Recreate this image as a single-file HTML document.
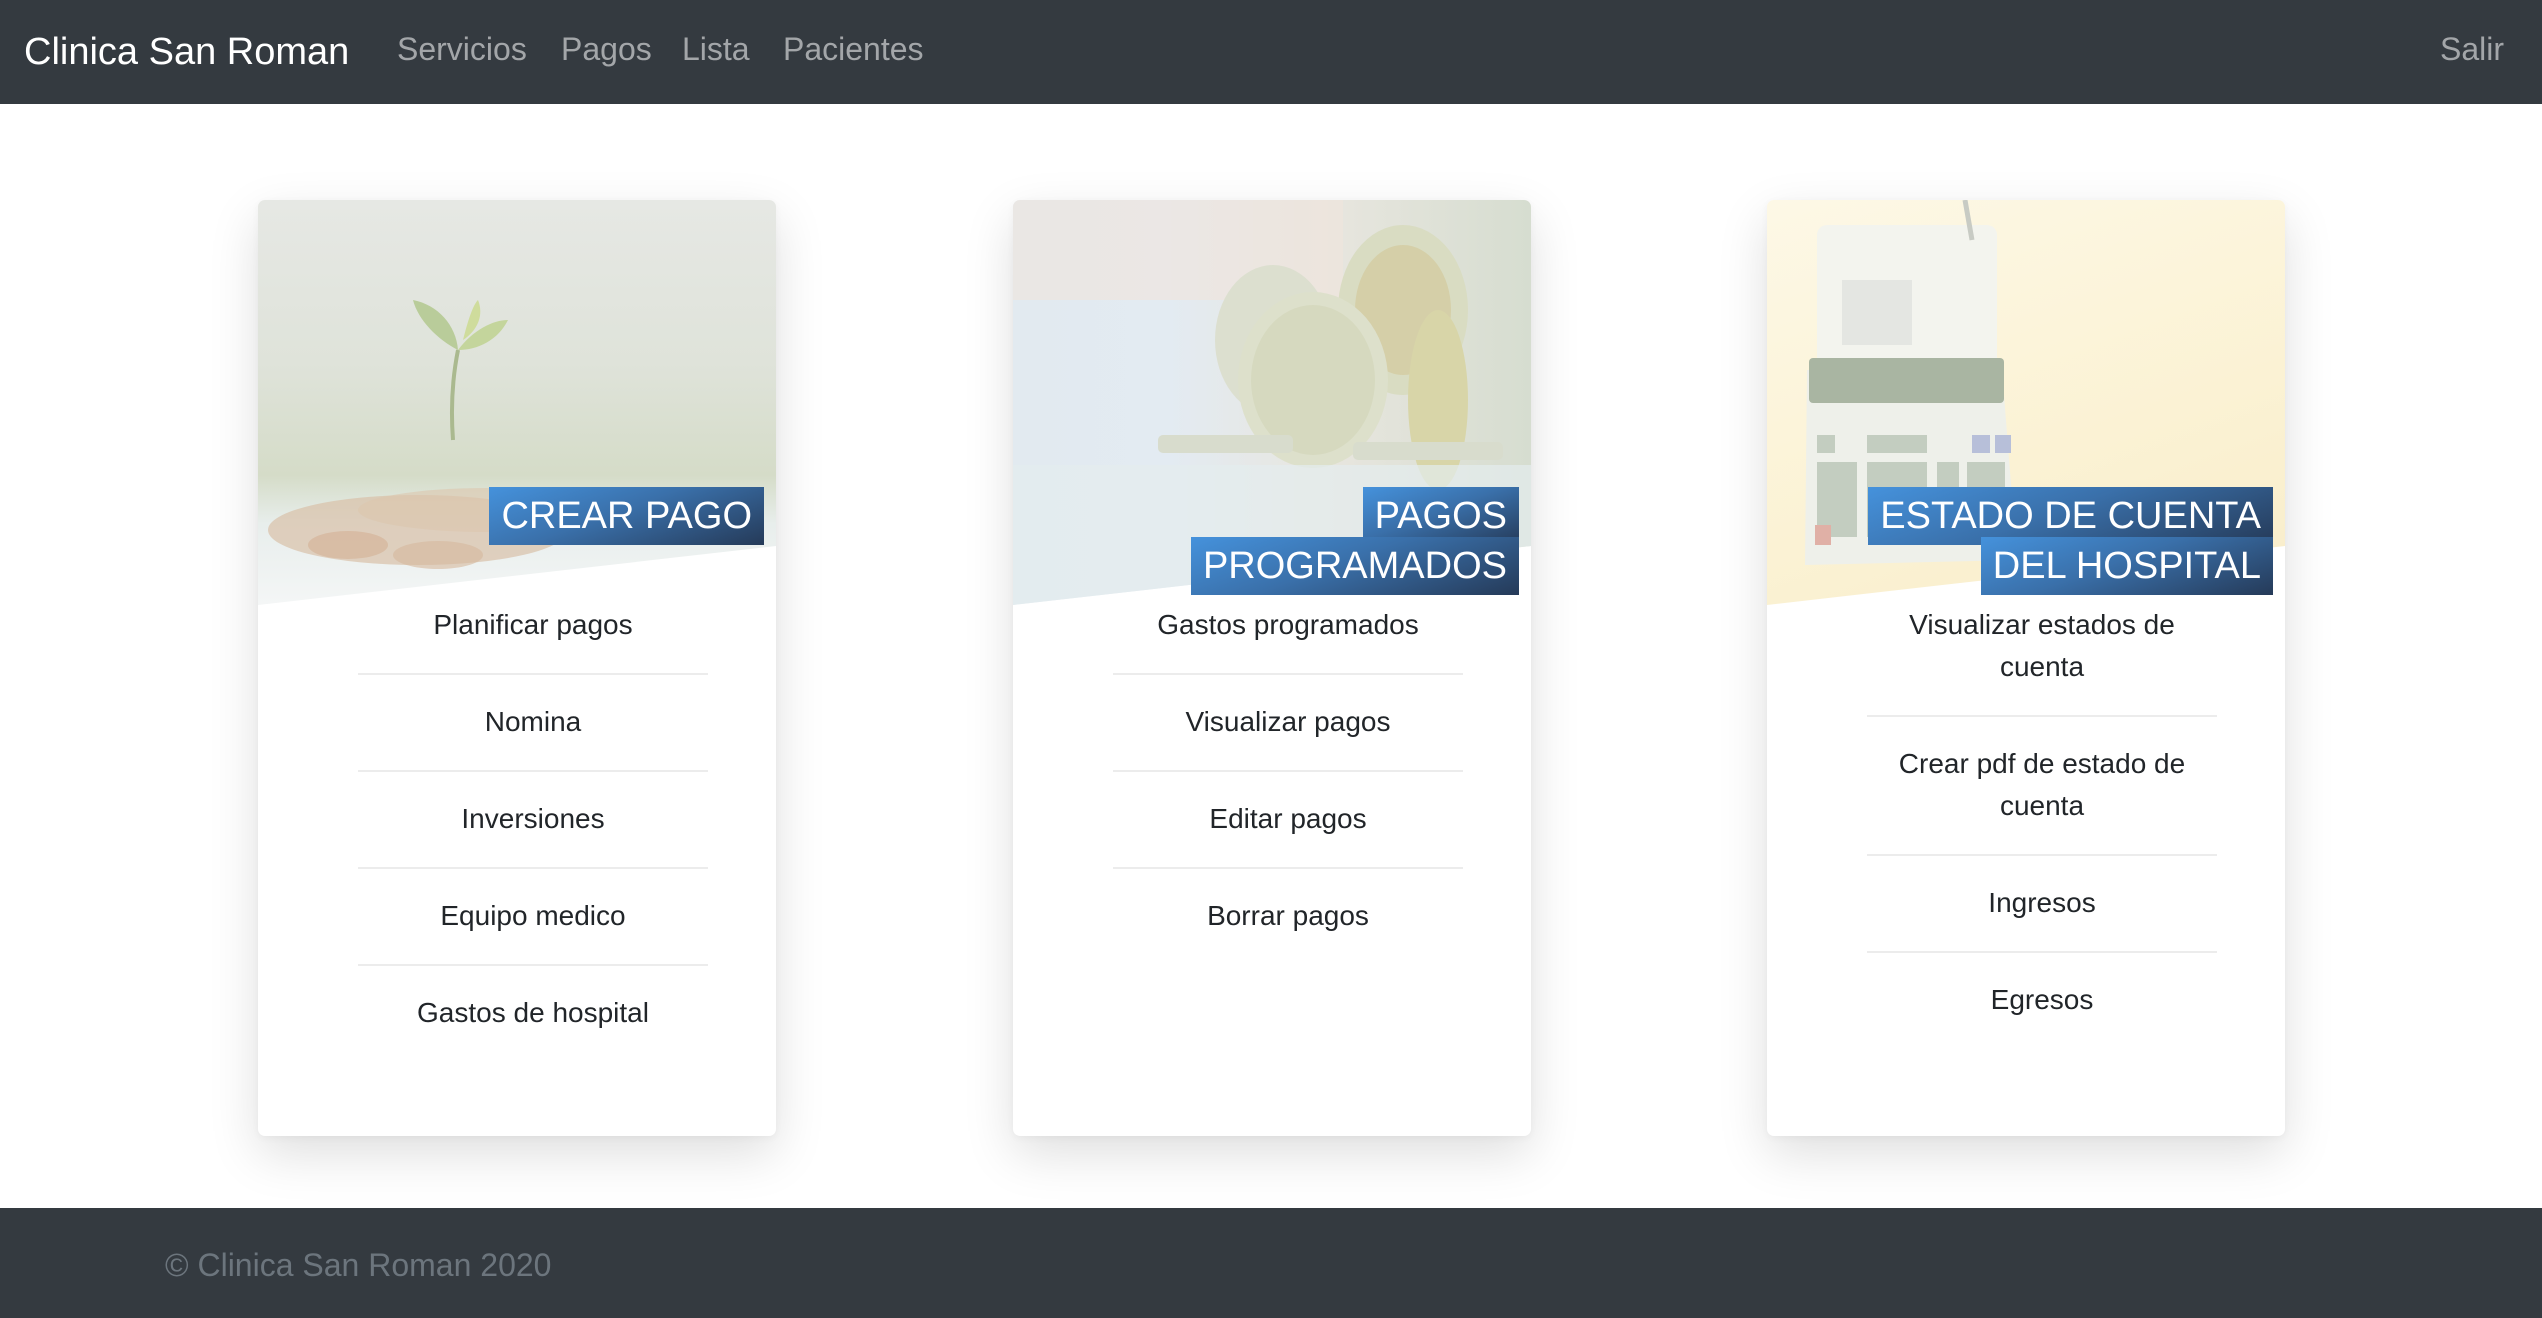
<!DOCTYPE html>
<html><head><meta charset="utf-8">
<style>
*{box-sizing:border-box;margin:0;padding:0}
html,body{width:2542px;height:1318px;overflow:hidden;background:#fff;font-family:"Liberation Sans",sans-serif}
.nav{position:absolute;left:0;top:0;width:2542px;height:104px;background:#343a40}
.brand{position:absolute;left:24px;top:29px;font-size:38px;color:#fff;line-height:46px}
.nl{position:absolute;top:30px;font-size:32px;color:#a3a6a9;line-height:38px}
.card{position:absolute;top:200px;width:518px;height:936px;background:#fff;border-radius:7px;box-shadow:0 18px 50px rgba(0,0,0,.13),0 2px 8px rgba(0,0,0,.04);overflow:hidden}
.img{position:absolute;left:0;top:0;width:518px;height:405px;clip-path:polygon(0 0,100% 0,100% 346px,0 405px)}
.lbl{position:absolute;right:12px;top:291px;text-align:right;font-size:38px;line-height:50px;width:490px}
.lbl span{color:#fff;padding:8px 12px;background:linear-gradient(160deg,#4592dc 0%,#3a70aa 45%,#253a58 100%);-webkit-box-decoration-break:clone;box-decoration-break:clone}
.list{position:absolute;left:100px;top:378px;width:350px;text-align:center}
.list div{font-size:28px;line-height:42px;color:#212529;padding:26px 0 27px;border-bottom:2px solid #ececec}
.list div:last-child{border-bottom:none}
.foot{position:absolute;left:0;top:1208px;width:2542px;height:110px;background:#343a40}
.foot span{position:absolute;left:165px;top:39px;font-size:32px;color:#6c757d}
</style></head><body>
<div class="nav">
<div class="brand">Clinica San Roman</div>
<div class="nl" style="left:397px">Servicios</div>
<div class="nl" style="left:561px">Pagos</div>
<div class="nl" style="left:682px">Lista</div>
<div class="nl" style="left:783px">Pacientes</div>
<div class="nl" style="left:2440px">Salir</div>
</div>

<div class="card" style="left:258px">
<div class="img" style="background:linear-gradient(180deg,#e6e8e4 0%,#dfe3da 40%,#d5dcc8 68%,#e8eeec 80%,#f4f6f6 100%)">
<svg width="518" height="405" viewBox="0 0 518 405">
<path d="M195 240 C192 200 196 170 200 150" stroke="#aab98f" stroke-width="4" fill="none"/>
<path d="M200 150 C180 140 160 120 155 100 C180 105 198 125 200 150Z" fill="#b9cc9a"/>
<path d="M200 150 C215 130 235 120 250 120 C240 140 220 150 200 150Z" fill="#c4d59c"/>
<path d="M205 140 C210 120 215 105 220 100 C226 115 220 130 205 140Z" fill="#cfdc9c"/>
<ellipse cx="160" cy="330" rx="150" ry="35" fill="#d9c0a8" opacity=".7"/>
<ellipse cx="230" cy="310" rx="130" ry="22" fill="#dcc6ad" opacity=".6"/>
<ellipse cx="90" cy="345" rx="40" ry="14" fill="#d3b195" opacity=".6"/>
<ellipse cx="180" cy="355" rx="45" ry="14" fill="#d6b79c" opacity=".6"/>
</svg>
</div>
<div class="list">
<div>Planificar pagos</div><div>Nomina</div><div>Inversiones</div><div>Equipo medico</div><div>Gastos de hospital</div>
</div>
<div class="lbl"><span>CREAR PAGO</span></div>
</div>

<div class="card" style="left:1013px">
<div class="img" style="background:linear-gradient(90deg,#e2eaf0 0%,#e3ebf2 30%,#e8e6df 60%,#d6ddd0 100%)">
<svg width="518" height="405" viewBox="0 0 518 405">
<rect x="0" y="0" width="330" height="100" fill="#f0e4dc" opacity=".6"/>
<ellipse cx="390" cy="110" rx="65" ry="85" fill="#d9dcc2"/>
<ellipse cx="390" cy="110" rx="48" ry="65" fill="#d5cfa8"/>
<ellipse cx="260" cy="140" rx="58" ry="75" fill="#dcdfcf"/>
<ellipse cx="300" cy="180" rx="75" ry="88" fill="#dde0cb"/>
<ellipse cx="300" cy="180" rx="62" ry="75" fill="#d6d9bf"/>
<ellipse cx="425" cy="200" rx="30" ry="90" fill="#d8d5a8"/>
<rect x="145" y="235" width="135" height="18" rx="5" fill="#d8dccd"/>
<rect x="340" y="242" width="150" height="18" rx="5" fill="#d8dccd"/>
<rect x="0" y="265" width="518" height="140" fill="#e4ecee" opacity=".7"/>
</svg>
</div>
<div class="list">
<div>Gastos programados</div><div>Visualizar pagos</div><div>Editar pagos</div><div>Borrar pagos</div>
</div>
<div class="lbl"><span>PAGOS<br>PROGRAMADOS</span></div>
</div>

<div class="card" style="left:1767px">
<div class="img" style="background:linear-gradient(160deg,#fdf8e6 0%,#fbf2d4 60%,#f8edca 100%)">
<svg width="518" height="405" viewBox="0 0 518 405">
<rect x="50" y="25" width="180" height="150" rx="10" fill="#f3f4ee"/>
<rect x="75" y="80" width="70" height="65" fill="#e4e6e2"/>
<path d="M198 0 L205 40" stroke="#c8cbc4" stroke-width="5"/>
<path d="M40 170 L235 170 L250 360 L38 365Z" fill="#eef0ea"/>
<rect x="42" y="158" width="195" height="45" rx="4" fill="#a9b5a2"/>
<g fill="#c3cdc0">
<rect x="50" y="235" width="18" height="18"/><rect x="100" y="235" width="60" height="18"/><rect x="205" y="235" width="18" height="18" fill="#b7bfd9"/><rect x="228" y="235" width="16" height="18" fill="#b7bfd9"/>
<rect x="50" y="262" width="40" height="75"/><rect x="100" y="262" width="60" height="75"/><rect x="170" y="262" width="22" height="75"/><rect x="200" y="262" width="38" height="75"/>
</g>
<rect x="48" y="325" width="16" height="20" fill="#e0b0a6"/>
</svg>
</div>
<div class="list">
<div>Visualizar estados de cuenta</div><div>Crear pdf de estado de cuenta</div><div>Ingresos</div><div>Egresos</div>
</div>
<div class="lbl"><span>ESTADO DE CUENTA<br>DEL HOSPITAL</span></div>
</div>

<div class="foot"><span>© Clinica San Roman 2020</span></div>
</body></html>
